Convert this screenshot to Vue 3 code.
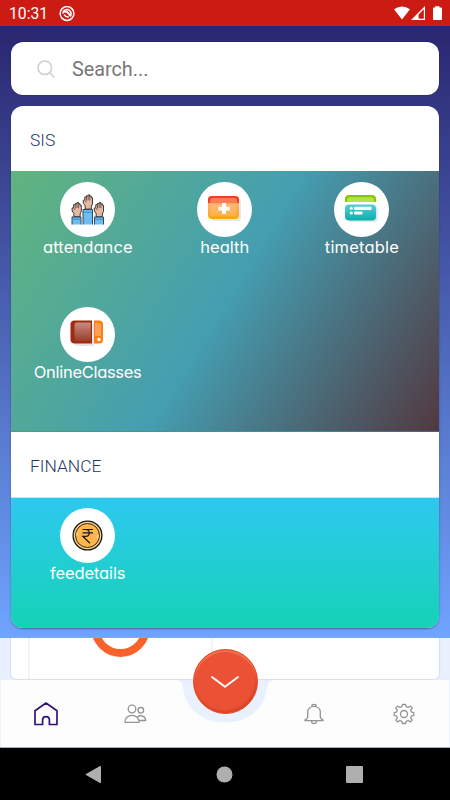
<script setup>
const sis = [
  { id: 'attendance', width: 89.5 },
  { id: 'health', width: 49 },
  { id: 'timetable', width: 74 },
  { id: 'OnlineClasses', width: 108 },
]
const finance = [{ id: 'feedetails', width: 75.5 }]
const groups = [
  { title: 'SIS', kind: 'sis', items: sis },
  { title: 'FINANCE', kind: 'finance', items: finance },
]
</script>

<template>
  <div class="phone">
    <header class="status">
      <span class="clock">10:31</span>
      <svg class="notice" width="16" height="16" viewBox="0 0 16 16" fill="none" stroke="#fff">
        <circle cx="8" cy="7.5" r="6.9" stroke-width="1.5" />
        <path d="M4.1 7.7C3.6 3.9 8.2 2.3 10.8 4.8C12.4 6.5 12.2 8.5 11.2 9.7" stroke-width="1.5" />
        <path d="M5.2 6.1Q7.3 4.7 8.5 6.3L12 10.3" stroke-width="2" />
        <path d="M5.2 8.7Q6.5 11.3 9.8 10.9" stroke-width="1.5" />
      </svg>
      <svg class="signals" width="50" height="16" viewBox="0 0 50 16" fill="#fff">
        <path d="M0 3.2Q8-2.4 16 3.2L8 13.6Z" />
        <path fill-rule="evenodd" d="M31 0V14H17ZM29.6 3.6L24.6 8.6V12.6H29.6Z" />
        <path d="M29.6 3.6V5.2H28ZM26 7V12.6H29.6V5Z" fill="#cc1b13" />
        <path d="M39 2.2Q39 1.4 39.8 1.4H41V.2H45.5V1.4H47Q48 1.4 48 2.2V13.3Q48 14 47.2 14H39.8Q39 14 39 13.3Z" />
      </svg>
    </header>

    <main class="panel">
      <div class="search">
        <svg width="18" height="18" viewBox="0 0 18 18" fill="none" stroke="#cfcfcf" stroke-width="1.5">
          <circle cx="7.8" cy="7.8" r="6.8" />
          <path d="M12.7 12.7L17 17" stroke-linecap="round" />
        </svg>
        <span class="hint">Search...</span>
      </div>

      <div class="card">
        <section v-for="g in groups" :key="g.title">
          <h2>{{ g.title }}</h2>
          <div class="tiles" :class="g.kind">
            <div v-for="item in g.items" :key="item.id" class="tile">
              <div class="disc">
                <svg v-if="item.id === 'attendance'" width="34" height="32" viewBox="0 0 34 32">
                  <defs>
                    <g id="hand">
                      <path d="M2.4 14.8V11.4L.6 9V6L2.1 5.5V2.7H3.8V1.5H5.5V.6H7V1.8H8.6V3.4H9.8V9.6L8.6 12V14.8Z" fill="#e4b99f" stroke="#29252a" stroke-width=".9" />
                      <path d="M3.8 2.7V6.4M5.5 1.5V6M7.1 1.8V6.2M2.1 6L3.6 8" fill="none" stroke="#49373a" stroke-width=".7" />
                    </g>
                  </defs>
                  <use href="#hand" x=".5" y="8" />
                  <use href="#hand" x="11.7" y=".3" />
                  <use href="#hand" x="22.7" y="8" />
                  <path d="M1 23H10V30.5H1ZM12 15.5H21.5V30.5H12ZM23.5 23H32.5V30.5H23.5Z" fill="#6bbdf3" />
                  <path d="M1 30.5V23H10V30.5M12 30.5V15.5H21.5V30.5M23.5 30.5V23H32.5V30.5" fill="none" stroke="#26394a" stroke-width=".9" />
                  <path d="M1.5 25.3H9.5M12.5 18.3H21M24 25.3H32" stroke="#3c82b9" stroke-width=".8" />
                </svg>

                <svg v-else-if="item.id === 'health'" class="lift" width="34" height="28" viewBox="0 0 34 28">
                  <defs>
                    <linearGradient id="med" x2="0" y2="1">
                      <stop stop-color="#ff773b" /><stop offset=".4" stop-color="#ffad62" /><stop offset="1" stop-color="#ffa319" />
                    </linearGradient>
                  </defs>
                  <rect x="4" y="5" width="30" height="22" rx="3" fill="#e7e7eb" />
                  <rect x="1" y="2" width="31" height="23" rx="4" fill="url(#med)" />
                  <path d="M1 9V6Q1 2 5 2H28Q32 2 32 6V9H29.5V6Q29.5 4.3 27.5 4.3H5.5Q3.5 4.3 3.5 6V9Z" fill="#f0411f" />
                  <rect x="3.5" y="4.3" width="26" height="5" rx="1.5" fill="#fb6a3d" />
                  <rect x="3.5" y="4" width="26" height="18" rx="2" fill="#fff" opacity=".13" />
                  <path d="M15 9H19V12.7H22.8V16.5H19V20H15V16.5H11.2V12.7H15Z" fill="#fff" />
                </svg>

                <svg v-else-if="item.id === 'timetable'" class="lift" width="34" height="28" viewBox="0 0 34 28">
                  <defs><linearGradient id="cal" x2="0" y2="1"><stop stop-color="#57d0d2" /><stop offset="1" stop-color="#08afaf" /></linearGradient></defs>
                  <path d="M1 8V5Q1 1 5 1H28Q32 1 32 5V8Z" fill="#86c70c" />
                  <path d="M3 8V6Q3 3.3 5.5 3.3H27.5Q30 3.3 30 6V8Z" fill="#b3e24a" />
                  <rect x="4" y="12" width="30" height="16" rx="4" fill="#e7e7eb" />
                  <rect x="1" y="10.5" width="31" height="16" rx="4" fill="url(#cal)" />
                  <g fill="#fff"><circle cx="7.3" cy="14.3" r="1.5" /><circle cx="7.3" cy="19" r="1.5" /><rect x="10" y="12.8" width="17.5" height="3.2" rx="1" /><rect x="10" y="17.5" width="8.5" height="3" rx="1" /></g>
                </svg>

                <svg v-else-if="item.id === 'OnlineClasses'" class="lift" width="34" height="28" viewBox="0 0 34 28">
                  <defs>
                    <linearGradient id="screen" x2="0" y2="1"><stop stop-color="#c78b80" /><stop offset="1" stop-color="#9b3d2a" /></linearGradient>
                  </defs>
                  <path d="M5 5H24V27H8Q4 27 4 24Z" fill="#e4e4e8" />
                  <path d="M22 1.5H4.5Q.5 1.5 .5 5.5V20.5Q.5 24.5 4.5 24.5H22Z" fill="#a02b12" />
                  <path d="M20.8 3.5H7Q4.5 3.5 4.5 6V19.5Q4.5 22 7 22H20.8Z" fill="url(#screen)" />
                  <path d="M24 1.5H29Q33 1.5 33 5.5V20.5Q33 24.5 29 24.5H24Z" fill="#ff7b13" />
                  <path d="M25 4H29Q31 4 31 6V17H25Z" fill="#ffa155" />
                  <circle cx="29" cy="20.5" r="1.8" fill="#fff" />
                </svg>

                <svg v-else width="32" height="32" viewBox="0 0 32 32" fill="none" stroke="#171717">
                  <circle cx="15.5" cy="15.5" r="14.4" fill="#ffd18b" stroke-width="1.3" />
                  <circle cx="15.5" cy="15.5" r="12" fill="#ffb74b" stroke-width=".9" />
                  <path d="M10.5 9.5H21M10.5 12.8H21M10.8 9.5H13.5C18.5 9.5 18.5 16.3 13.5 16.3H10.8L18 23.3" stroke-width="1.2" />
                  <path d="M5.2 12.5V15.5M25.8 15.5V18.5" stroke="#ffe2a5" stroke-width="1.3" />
                </svg>
              </div>
              <svg class="label" width="120" height="24" viewBox="0 0 120 24">
                <text x="59.8" y="16.2" text-anchor="middle" :textLength="item.width">{{ item.id }}</text>
              </svg>
            </div>
          </div>
        </section>
      </div>
    </main>

    <div class="under">
      <div class="sheet">
        <svg width="429" height="42" viewBox="0 0 429 42" fill="none">
          <path d="M18 0V42M201 0V18" stroke="#f1f1f1" stroke-width="1.5" />
          <circle cx="109.5" cy="-10.5" r="25.4" stroke="#f9622b" stroke-width="8" />
        </svg>
      </div>
    </div>

    <nav class="tabs">
      <svg class="plate" width="450" height="68" viewBox="0 0 450 68">
        <path d="M1 0H176Q182 0 183 7C185 29 202 42.5 225 42.5S265 29 267 7Q268 0 274 0H449V67H1Z" fill="#fdfdfe" />
      </svg>
      <span class="tab">
        <svg width="26" height="26" viewBox="0 0 26 26" fill="none" stroke="#35107b" stroke-width="1.7" stroke-linejoin="round">
          <path d="M2 9.7L13 2L24 9.7V23.5H16.4V19C16.4 14.5 9.6 14.5 9.6 19V23.5H2Z" />
        </svg>
      </span>
      <span class="tab">
        <svg width="24" height="22" viewBox="0 0 24 22" fill="none" stroke="#949494" stroke-width="1.3" stroke-linejoin="round">
          <circle cx="9" cy="6" r="3.8" /><circle cx="17.8" cy="7.3" r="2.8" />
          <path d="M2 19.3C1.8 10 16.2 10 16 19.3ZM14.5 14C17.8 11.3 22.5 13.4 22.7 17.5H16" />
        </svg>
      </span>
      <span class="tab"></span>
      <span class="tab">
        <svg width="22" height="24" viewBox="0 0 22 24" fill="none" stroke="#949494" stroke-width="1.3" stroke-linejoin="round">
          <path d="M2 18.7H20V17.8Q17.3 17 17.3 14.5V9.5C17.3 2.7 4.7 2.7 4.7 9.5V14.5Q4.7 17 2 17.8ZM8.8 5V3.8Q8.8 2.3 11 2.3T13.2 3.8V5M8.6 19C8.6 22.4 13.4 22.4 13.4 19" />
        </svg>
      </span>
      <span class="tab">
        <svg width="24" height="24" viewBox="0 0 24 24" fill="none" stroke="#949494" stroke-width="1.3" stroke-linejoin="round">
          <circle cx="12" cy="12" r="3.5" />
          <path d="M10.5 2.5H13.5L14.2 4.7L16.1 5.5L18.4 4.1L20.2 5.9L18.7 8.2L19.5 10.1L21.8 10.6V13.4L19.5 13.9L18.7 15.8L20.2 18.1L18.4 19.9L16.1 18.5L14.2 19.3L13.5 21.5H10.5L9.8 19.3L7.9 18.5L5.6 19.9L3.8 18.1L5.3 15.8L4.5 13.9L2.2 13.4V10.6L4.5 10.1L5.3 8.2L3.8 5.9L5.6 4.1L7.9 5.5L9.8 4.7Z" />
        </svg>
      </span>
      <button class="fab" aria-label="Close menu">
        <svg width="30" height="16" viewBox="0 0 30 16" fill="none" stroke="#fff" stroke-width="2" stroke-linecap="round" stroke-linejoin="round"><path d="M2 3L15 12.7L28 3" /></svg>
      </button>
    </nav>

    <footer class="system">
      <svg width="17" height="19" viewBox="0 0 17 19"><path d="M1 9Q0 9.5 1 10L15 18Q16 18.3 16 17.2V1.8Q16 .7 15 1Z" fill="#afafaf" /></svg>
      <svg width="17" height="17" viewBox="0 0 17 17"><circle cx="8.5" cy="8.5" r="8" fill="#afafaf" /></svg>
      <svg width="17" height="17" viewBox="0 0 17 17"><rect width="17" height="17" rx="1" fill="#afafaf" /></svg>
    </footer>
  </div>
</template>

<style>
body { margin: 0; }
</style>

<style scoped>
.phone { width: 450px; height: 800px; overflow: hidden; display: flex; flex-direction: column; background: #e9f1ff; font-family: Roboto, sans-serif; }
.phone * { box-sizing: border-box; }
.phone svg { display: block; flex: none; }
.status { height: 26px; flex: none; background: #cc1b13; color: #fff; display: flex; align-items: center; padding: 1px 7px 0 9px; }
.clock { font-size: 15.7px; line-height: 20px; width: 50px; padding-top: 1px; }
.signals { margin-left: auto; margin-right: -1px; }
.panel { height: 612px; flex: none; padding: 16px 11px 11px; background: linear-gradient(#2a266f, #6fa4ff); display: flex; flex-direction: column; gap: 11px; }
.search { height: 53px; flex: none; border-radius: 12px; background: #fff; box-shadow: 0 0 1px #00005f; display: flex; align-items: center; gap: 17px; padding-left: 26px; font-size: 19.8px; color: #777; }
.hint { padding-top: 2px; }
.card { height: 522px; flex: none; overflow: hidden; border-radius: 12px; background: #fff; box-shadow: 0 1px 2px #16305480; }
h2 { margin: 0; height: 65px; padding: 2px 0 0 19px; display: flex; align-items: center; font-size: 17.4px; font-weight: 300; color: #1f3765; }
.tiles { display: grid; grid-template-columns: repeat(3, 137px); grid-auto-rows: 125px; padding: 11px 0 0 8px; }
.sis { height: 261px; background: linear-gradient(121.3deg, #61b47e, #449eb1 50%, #523840); border-bottom: 1px solid #0069703d; }
.finance { height: 131px; padding-top: 10px; background: linear-gradient(#2ec8ef, #15d3b6); border-top: 1px solid #b5ebf8; background-clip: padding-box; }
.tile { display: flex; flex-direction: column; align-items: center; }
.disc { width: 55px; height: 55px; flex: none; border-radius: 50%; background: #fff; display: flex; align-items: center; justify-content: center; }
.lift { margin-bottom: 3px; margin-right: 1px; }
.label { overflow: visible; fill: #fff; font-family: Inter, sans-serif; font-size: 16.5px; font-weight: 400; font-feature-settings: "cv11"; }
.under { height: 42px; flex: none; padding: 0 11px 1px; }
.sheet { height: 41px; overflow: hidden; background: #fff; border-radius: 0 0 5px 5px; box-shadow: 0 0 2px #aaaebb; }
.tabs { height: 68px; flex: none; position: relative; display: flex; align-items: center; padding-left: 1px; border-bottom: 1px solid #9eb4bb; }
.plate { position: absolute; inset: 0; }
.tab { position: relative; width: 89.5px; display: flex; justify-content: center; }
.fab { position: absolute; left: 192.5px; top: -31px; width: 65px; height: 65px; border: 1px solid #e64721; border-radius: 50%; padding: 0; background: #eb5134; box-shadow: inset 0 2px 1px #f47453, inset -1px -2px 2px #d34425; display: flex; align-items: center; justify-content: center; }
.system { height: 52px; flex: none; background: #000; display: flex; align-items: center; justify-content: space-between; padding: 0 87px 0 85px; }
</style>
